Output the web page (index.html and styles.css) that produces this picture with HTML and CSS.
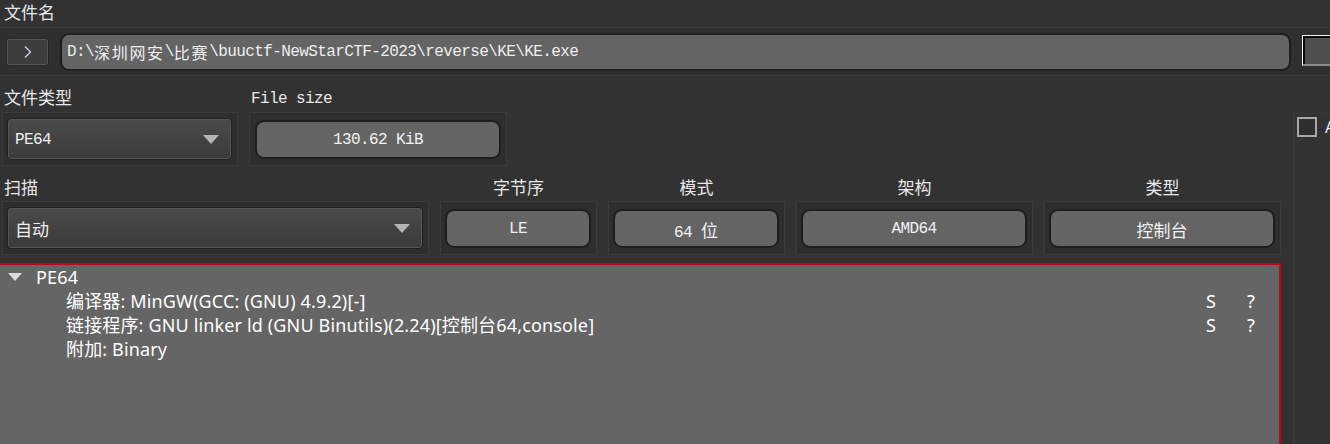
FILE: index.html
```html
<!DOCTYPE html>
<html lang="zh-CN">
<head>
<meta charset="utf-8">
<title>Detect It Easy</title>
<link rel="stylesheet" href="styles.css">
</head>
<body>
<div class="app">
  <div class="title">文件名</div>
  <div class="filebar">
    <div class="go">
      <svg width="10" height="14" viewBox="0 0 10 14"><path d="M2 1.5 L7.5 7 L2 12.5" fill="none" stroke="#d8d8e8" stroke-width="1.2"/></svg>
    </div>
    <div class="path mono">D:\<span class="wide">深圳网安</span>\<span class="wide">比赛</span>\buuctf-NewStarCTF-2023\reverse\KE\KE.exe</div>
    <div class="focus-btn"></div>
  </div>
  <div class="content">
    <div class="main">
      <div class="row row2">
        <div class="field f-type">
          <div class="lbl">文件类型</div>
          <div class="frame">
            <div class="combo"><span class="mono">PE64</span><span class="arrow"></span></div>
          </div>
        </div>
        <div class="field f-size">
          <div class="lbl mono">File size</div>
          <div class="frame">
            <div class="val mono"><span>130.62 KiB</span></div>
          </div>
        </div>
      </div>
      <div class="row row3">
        <div class="field f-scan">
          <div class="lbl">扫描</div>
          <div class="frame">
            <div class="combo"><span class="cjk">自动</span><span class="arrow"></span></div>
          </div>
        </div>
        <div class="field f-le">
          <div class="lbl center">字节序</div>
          <div class="frame"><div class="val mono"><span>LE</span></div></div>
        </div>
        <div class="field f-mode">
          <div class="lbl center">模式</div>
          <div class="frame"><div class="val mono"><span>64 <span class="wide">位</span></span></div></div>
        </div>
        <div class="field f-arch">
          <div class="lbl center">架构</div>
          <div class="frame"><div class="val mono"><span>AMD64</span></div></div>
        </div>
        <div class="field f-kind">
          <div class="lbl center">类型</div>
          <div class="frame"><div class="val mono"><span class="wide">控制台</span></div></div>
        </div>
      </div>
      <div class="tree">
        <div class="trow top"><span class="tri"></span><span class="name">PE64</span></div>
        <div class="trow child"><span class="name">编译器: MinGW(GCC: (GNU) 4.9.2)[-]</span><span class="c1">S</span><span class="c2">?</span></div>
        <div class="trow child"><span class="name">链接程序: GNU linker ld (GNU Binutils)(2.24)[控制台64,console]</span><span class="c1">S</span><span class="c2">?</span></div>
        <div class="trow child"><span class="name">附加: Binary</span></div>
      </div>
    </div>
    <div class="side">
      <div class="sideitem"><span class="check"></span><span class="a">A</span></div>
    </div>
  </div>
</div>
</body>
</html>
```
FILE: styles.css
```css
html, body {
  margin: 0;
  padding: 0;
  background: #323232;
  overflow: hidden;
}
.app {
  width: 1330px;
  height: 444px;
  overflow: hidden;
  color: #e8e8e8;
  font-family: "Noto Sans CJK SC", "Noto Sans", sans-serif;
}
.mono {
  font-family: "Liberation Mono", "Noto Sans CJK SC", monospace;
  font-size: 16px;
  letter-spacing: -0.6px;
}
.wide {
  font-family: "Noto Sans CJK SC", sans-serif;
  font-size: 16px;
  letter-spacing: 1.7px;
}
.cjk {
  font-family: "Noto Sans CJK SC", sans-serif;
  font-size: 17px;
}
.title {
  height: 27px;
  line-height: 24px;
  padding-left: 4px;
  font-size: 17px;
  color: #e8e8e8;
}
.filebar {
  height: 47px;
  border-top: 1px solid #3b3b3b;
  border-bottom: 1px solid #3b3b3b;
  background: #2f2f2f;
  display: flex;
  align-items: center;
  padding-left: 6px;
  gap: 11px;
}
.go {
  width: 41px;
  height: 26px;
  border: 1px solid #262626;
  border-radius: 3px;
  background: #3d3d3d;
  box-shadow: inset 0 0 0 1px #555;
  display: flex;
  align-items: center;
  justify-content: center;
  flex: none;
}
.path {
  width: 1222px;
  height: 33px;
  flex: none;
  background: #646464;
  border: 2px solid #1e1e1e;
  border-radius: 9px;
  display: flex;
  align-items: center;
  padding: 1px 0 0 5px;
  box-sizing: content-box;
  color: #eeeeee;
  white-space: pre;
}
.focus-btn {
  width: 60px;
  height: 28px;
  flex: none;
  margin-top: -2px;
  background: #4f4f4f;
  border: 1px solid #f4f4f4;
  border-bottom: 2px solid #8c8c8c;
  box-shadow: inset 2px 2px 0 #0c0c0c;
}
.content {
  display: flex;
  gap: 12px;
}
.main {
  width: 1281px;
  flex: none;
}
.row {
  display: flex;
  gap: 11px;
  padding-left: 2px;
}
.field {
  display: flex;
  flex-direction: column;
}
.lbl {
  line-height: 24px;
  font-size: 17px;
  padding-left: 2px;
  color: #e8e8e8;
  letter-spacing: 0;
}
.lbl.mono { font-size: 16px; letter-spacing: -0.6px; }
.lbl.center { text-align: center; padding-left: 0; }
.row2 .lbl { height: 27px; padding-top: 9px; }
.row2 .lbl.mono { padding-top: 11px; height: 25px; }
.row3 .lbl { height: 26px; padding-top: 9px; }
.frame {
  height: 52px;
  border: 1px solid #3b3b3b;
  background: #2e2e2e;
  display: flex;
  align-items: center;
  padding: 0 5px 0 4px;
}
.combo {
  flex: 1;
  height: 39px;
  border: 1px solid #222;
  border-radius: 4px;
  background: linear-gradient(#4a4a4a, #3b3b3b);
  box-shadow: inset 0 0 0 1px #565656;
  display: flex;
  align-items: center;
  justify-content: space-between;
  padding: 1px 12px 0 7px;
  color: #f0f0f0;
}
.arrow {
  width: 0;
  height: 0;
  border-left: 8px solid transparent;
  border-right: 8px solid transparent;
  border-top: 9px solid #b4b4b4;
}
.val {
  flex: 1;
  height: 35px;
  background: #646464;
  border: 2px solid #1e1e1e;
  border-radius: 9px;
  display: flex;
  align-items: center;
  justify-content: center;
  color: #f2f2f2;
  white-space: pre;
  padding-top: 2px;
  box-sizing: content-box;
  height: 33px;
}
.val .wide { font-size: 17px; letter-spacing: 0; }
.f-type { width: 236px; }
.f-size { width: 258px; }
.f-size .frame { padding: 0 5px; }
.f-scan { width: 427px; }
.f-le { width: 157px; }
.f-mode { width: 177px; }
.f-arch { width: 237px; }
.f-kind { width: 237px; }
.tree {
  margin-top: 8px;
  height: 200px;
  background: #656565;
  border-top: 2px solid #c8001e;
  border-right: 2px solid #c8001e;
  color: #ffffff;
  font-family: "Noto Sans", "Noto Sans CJK SC", sans-serif;
  font-size: 18px;
  letter-spacing: 0.15px;
}
.trow {
  height: 24px;
  line-height: 24px;
  display: flex;
  align-items: center;
  white-space: pre;
}
.trow.top { padding-left: 8px; }
.tri {
  width: 0;
  height: 0;
  border-left: 7px solid transparent;
  border-right: 7px solid transparent;
  border-top: 8px solid #dcdcdc;
  margin-right: 14px;
}
.trow.child { padding-left: 66px; }
.trow .name { flex: 1; }
.c1 { width: 41px; }
.c2 { width: 32px; }
.side {
  flex: 1;
  margin-top: 37px;
  height: 340px;
  border-left: 2px solid #3c3c3c;
  border-top: 1px solid #373737;
}
.sideitem {
  display: flex;
  align-items: center;
  gap: 8px;
  padding: 2px 0 0 2px;
}
.check {
  width: 16px;
  height: 16px;
  border: 2px solid #a8a8a8;
  background: #2e2e2e;
  flex: none;
}
.a {
  font-family: "Noto Sans", sans-serif;
  font-size: 16px;
  color: #e8eef8;
}
```
